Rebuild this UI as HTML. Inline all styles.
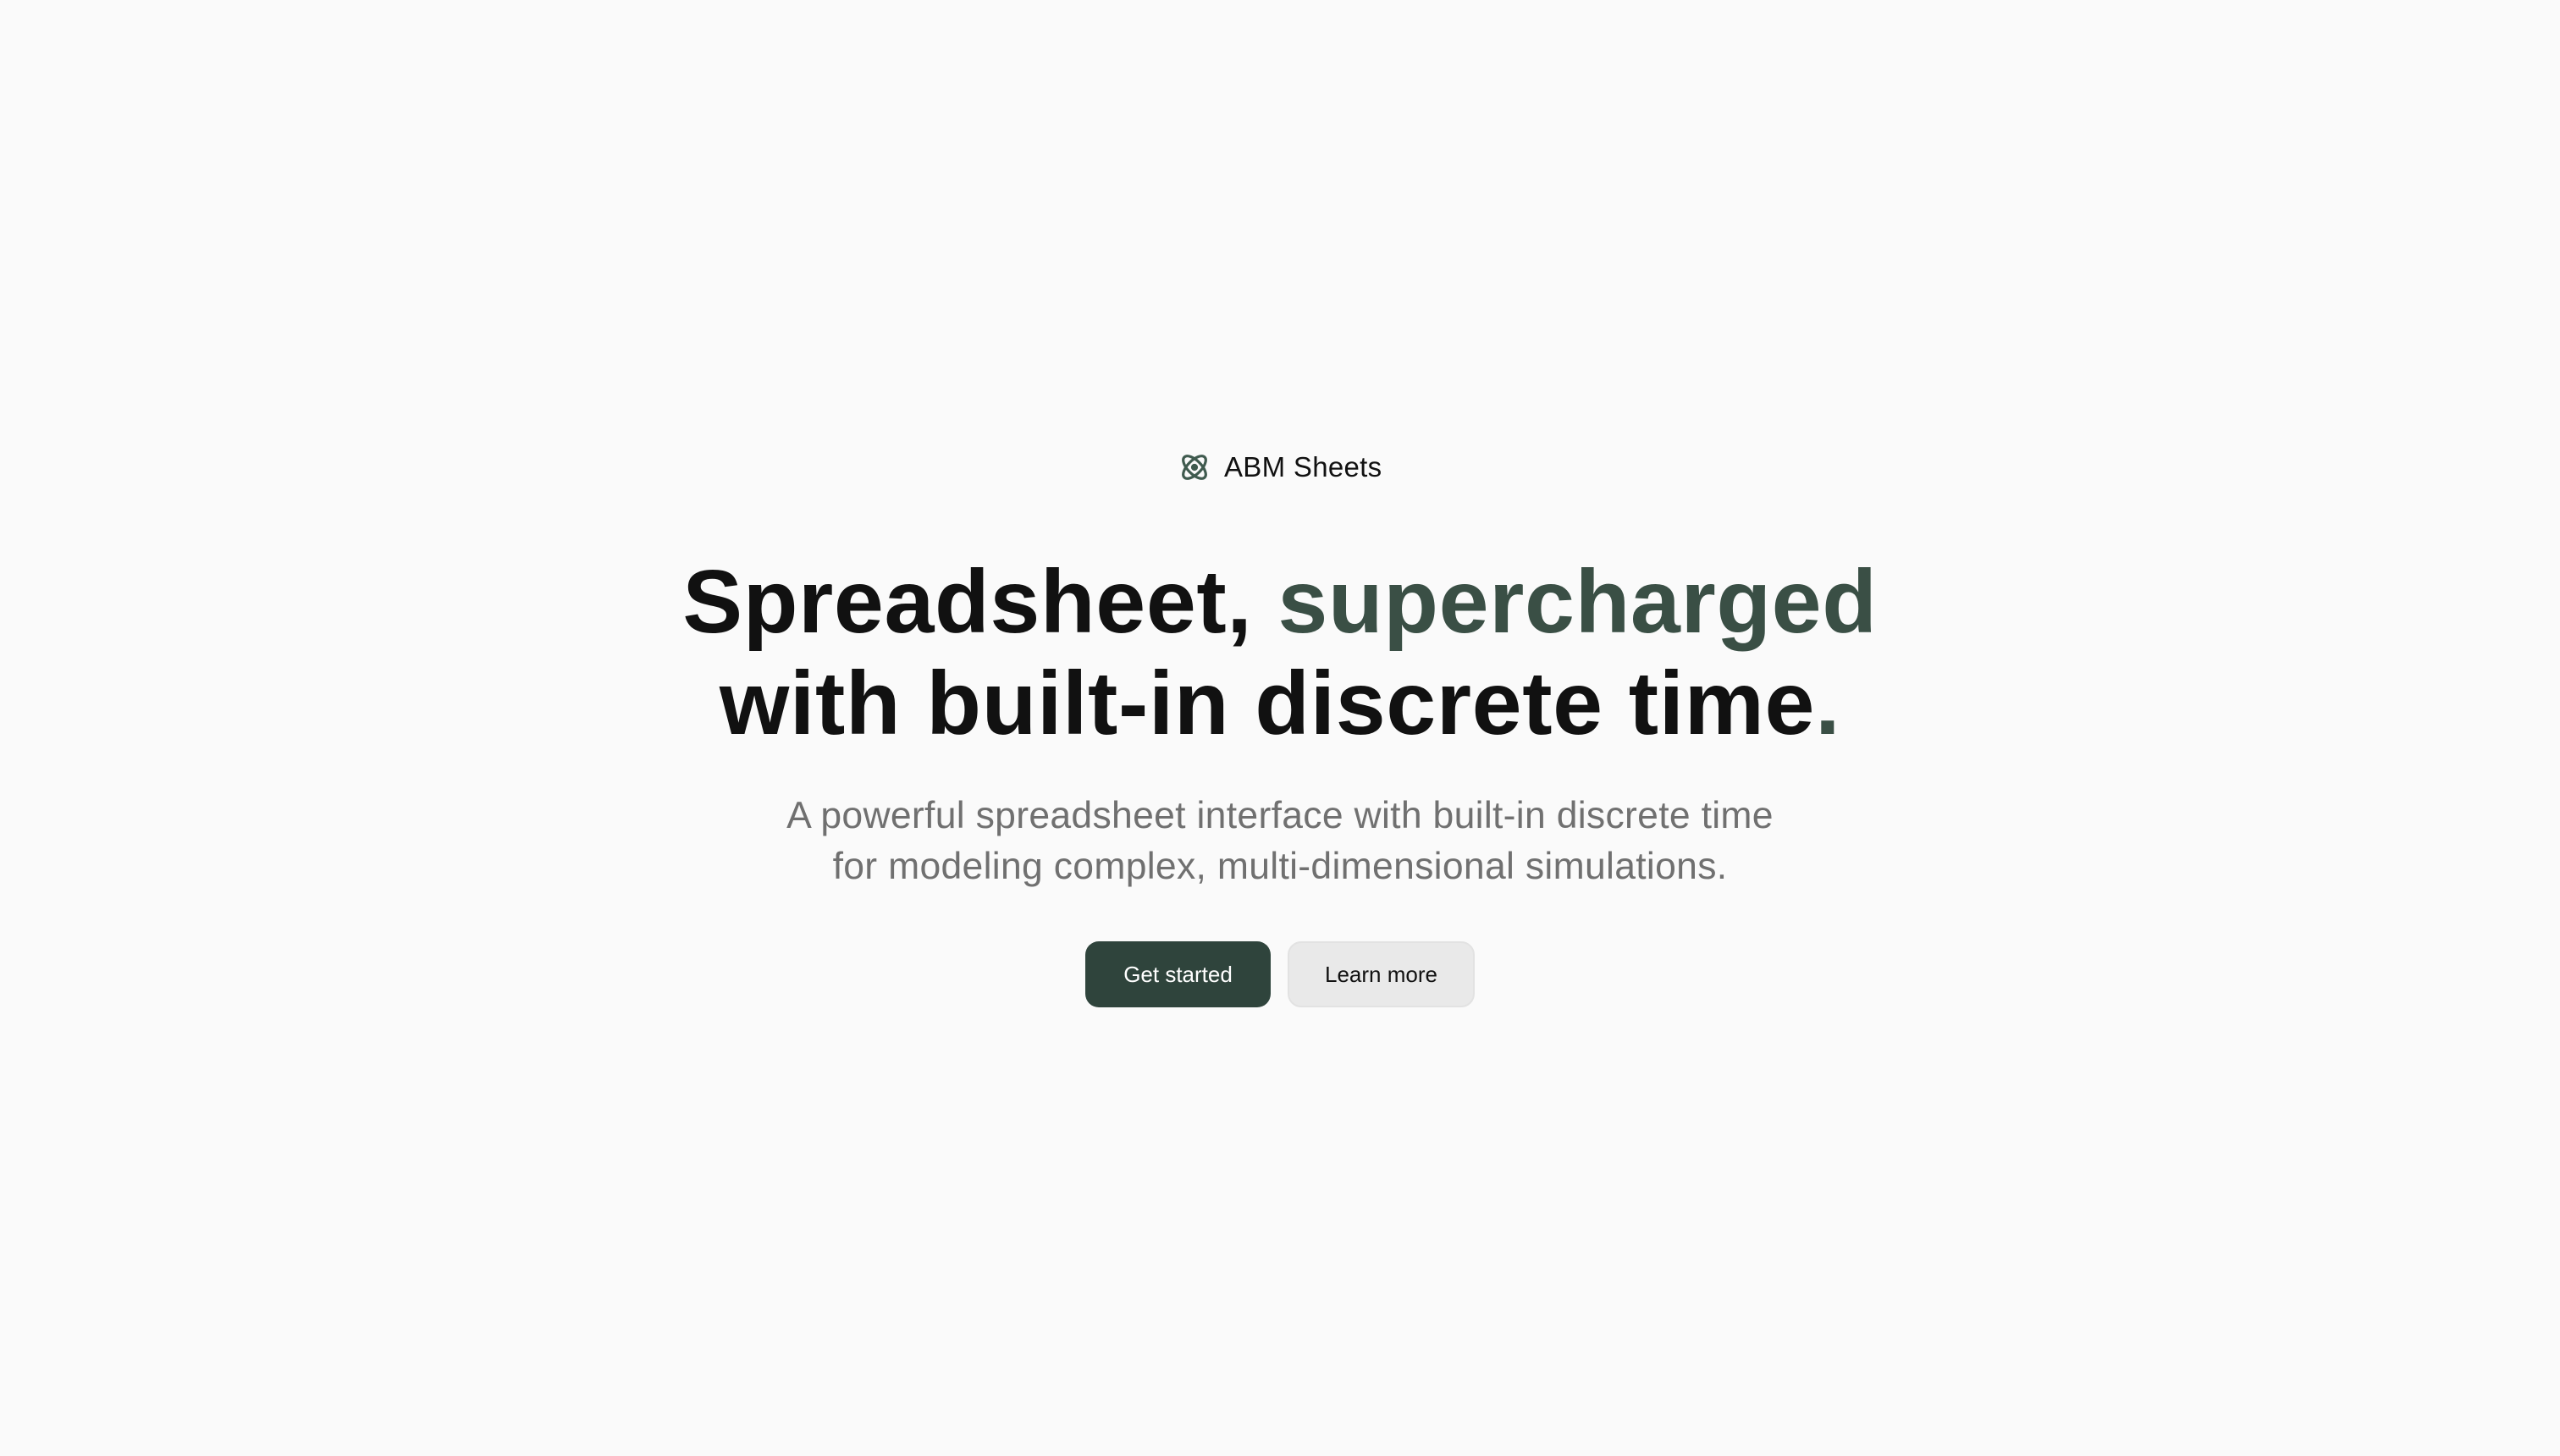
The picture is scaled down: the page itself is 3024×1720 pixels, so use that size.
<!DOCTYPE html>
<html><head><meta charset="utf-8"><style>
html,body{margin:0;padding:0;background:#fafafa;width:3024px;height:1720px;overflow:hidden;font-family:"Liberation Sans",sans-serif}
.logo{position:absolute;left:1393px;top:532px;height:40px;display:flex;align-items:center}
.logo span{font-size:33px;font-weight:500;color:#111;margin-left:17px;letter-spacing:0.3px}
h1{position:absolute;left:0;width:3024px;top:651px;margin:0;text-align:center;font-size:106px;line-height:120px;font-weight:bold;color:#111;letter-spacing:0.6px}
h1 .g{color:#3a4f45}
p{position:absolute;left:0;width:3024px;top:934px;margin:0;text-align:center;font-size:44.5px;line-height:60px;color:#707070;letter-spacing:0.3px}
.b{position:absolute;top:1112px;height:78px;border-radius:16px;box-sizing:border-box;display:flex;align-items:center;justify-content:center;font-size:26px}
.b1{left:1282px;width:219px;background:#2f443c;color:#fff}
.b2{left:1521px;width:221px;background:#e9e9e9;border:2px solid #e2e2e2;color:#111}
</style></head><body>
<div class="logo"><svg width="36" height="36" viewBox="0 0 36 36" fill="none" stroke="#3f5a4e" stroke-width="3.2"><ellipse cx="18" cy="18" rx="17" ry="8" transform="rotate(45 18 18)"/><ellipse cx="18" cy="18" rx="17" ry="8" transform="rotate(-45 18 18)"/><circle cx="18" cy="18" r="2.5" fill="#3f5a4e"/></svg><span>ABM Sheets</span></div>
<h1>Spreadsheet, <span class="g">supercharged</span><br>with built-in discrete time<span class="g">.</span></h1>
<p>A powerful spreadsheet interface with built-in discrete time<br>for modeling complex, multi-dimensional simulations.</p>
<div class="b b1">Get started</div>
<div class="b b2">Learn more</div>
</body></html>
